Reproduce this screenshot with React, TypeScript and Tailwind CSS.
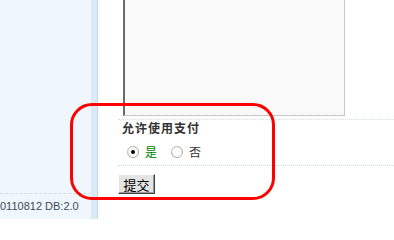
import React from "react";

function Radio({ checked }: { checked?: boolean }) {
  return (
    <svg width="12" height="12" viewBox="0 0 12 12" className="shrink-0">
      <circle cx="6" cy="6" r="5.5" fill="#ffffff" stroke="#a8a8a0" />
      <path d="M2 8.5 A4.5 4.5 0 0 1 8.5 2" fill="none" stroke="#d8d8d0" strokeWidth="1" />
      {checked && <circle cx="6" cy="6" r="2" fill="#000000" />}
    </svg>
  );
}

export default function App() {
  return (
    <div
      className="relative flex h-[219px] w-[394px] overflow-hidden bg-white text-[12px] text-[#333]"
      style={{ fontFamily: '"Liberation Sans", "Noto Sans CJK SC", sans-serif' }}
    >
      {/* sidebar */}
      <div className="flex w-[91px] shrink-0 flex-col bg-[#f0f7fc]">
        <div className="flex-1" />
        <div className="mb-[6px] flex flex-col">
          <div className="h-0 border-t border-dashed border-[#d6dde4]" />
          <div className="mt-[5px] whitespace-nowrap text-[11px] leading-[14px] text-[#3c4a5a]">
            0110812 DB:2.0
          </div>
        </div>
      </div>
      <div className="w-[6px] shrink-0 bg-[#dce9f6]" />
      <div className="w-px shrink-0 bg-[#c5d6e6]" />

      {/* main */}
      <div className="flex flex-1 flex-col pl-[20px]">
        <div className="ml-[5px] h-[116px] w-[222px] border-b border-l-2 border-r border-b-[#c8c8c8] border-l-[#6a6a6a] border-r-[#c8c8c8] bg-[#f9f9f9]" />
        <div className="mt-[3px] h-0 border-t border-dotted border-[#cfe0ee]" />
        <div
          className="ml-[4px] mt-[1px] text-[12px] font-bold leading-[14px] tracking-[1px] text-[#333]"
          style={{ fontFamily: '"Noto Sans CJK SC", sans-serif' }}
        >
          允许使用支付
        </div>
        <div
          className="ml-[9px] mt-[10px] flex h-[14px] items-center text-[12px] leading-[14px]"
          style={{ fontFamily: '"Noto Sans CJK SC", sans-serif' }}
        >
          <Radio checked />
          <span className="ml-[6px] text-[#008000]">是</span>
          <span className="ml-[14px]">
            <Radio />
          </span>
          <span className="ml-[6px] text-[#333]">否</span>
        </div>
        <div className="mt-[6px] h-0 border-t border-dotted border-[#cfe0ee]" />
        <div className="mt-[8px] flex">
          <button
            className="flex h-[20px] w-[37px] items-center justify-center border border-b-[#404040] border-l-[#ffffff] border-r-[#404040] border-t-[#ffffff] bg-[#e4e4e4] text-[13px] leading-none text-black shadow-[inset_-1px_-1px_0_#9a9a9a]"
            style={{ fontFamily: '"Noto Sans CJK SC", sans-serif' }}
          >
            提交
          </button>
        </div>
      </div>

      {/* annotation */}
      <div className="pointer-events-none absolute left-[70px] top-[103px] h-[97px] w-[205px] rounded-[22px] border-[3px] border-[#ff0000]" />
    </div>
  );
}
